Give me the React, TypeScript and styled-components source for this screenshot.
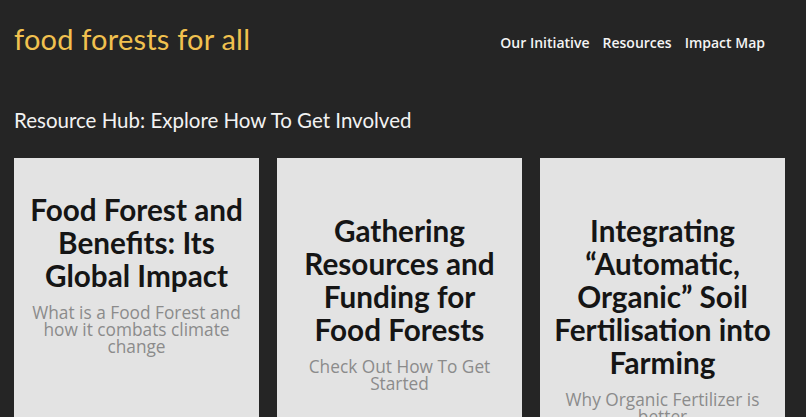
import React from 'react';
import styled, { createGlobalStyle } from 'styled-components';

const GlobalStyle = createGlobalStyle`
  html, body {
    margin: 0;
    padding: 0;
    background-color: #252525;
  }
  body {
    font-family: 'Open Sans', 'Liberation Sans', sans-serif;
    overflow: hidden;
  }
`;

const Page = styled.div`
  min-height: 417px;
  background-color: #252525;
  padding: 0 21px 0 14px;
`;

const Header = styled.header`
  display: flex;
  align-items: center;
  justify-content: space-between;
  height: 82px;
`;

const Logo = styled.h1`
  margin: 0;
  font-family: 'Lato', 'Liberation Sans', sans-serif;
  font-weight: 400;
  font-size: 29px;
  color: #f1c14f;
  letter-spacing: 0.2px;
  padding-bottom: 5px;
`;

const Nav = styled.nav`
  display: flex;
  gap: 13px;
  padding: 2px 20px 0 0;
`;

const NavLink = styled.a`
  font-family: 'Open Sans', 'Liberation Sans', sans-serif;
  font-weight: 600;
  font-size: 14px;
  color: #f4f4f4;
  text-decoration: none;
`;

const PageTitle = styled.h2`
  margin: 26px 0 26px;
  font-family: 'Lato', 'Liberation Sans', sans-serif;
  font-weight: 400;
  font-size: 20.5px;
  color: #f2f2f2;
`;

const CardGrid = styled.div`
  display: grid;
  grid-template-columns: repeat(3, 245px);
  gap: 18px;
`;

const Card = styled.div<{ $top: number }>`
  background-color: #e3e3e3;
  height: 300px;
  padding: ${(p) => p.$top}px 12px 0;
  box-sizing: border-box;
  text-align: center;
`;

const CardTitle = styled.h3`
  margin: 0 0 12px;
  font-family: 'Lato', 'Liberation Sans', sans-serif;
  font-weight: 700;
  font-size: 29.7px;
  line-height: 33px;
  color: #151515;
`;

const CardText = styled.p`
  margin: 0;
  font-family: 'Open Sans', 'Liberation Sans', sans-serif;
  font-size: 17.3px;
  line-height: 17px;
  color: #8b8b8b;
`;

const cards = [
  {
    title: 'Food Forest and Benefits: Its Global Impact',
    text: 'What is a Food Forest and how it combats climate change',
    top: 35,
  },
  {
    title: 'Gathering Resources and Funding for Food Forests',
    text: 'Check Out How To Get Started',
    top: 56,
  },
  {
    title: 'Integrating \u201CAutomatic, Organic\u201D Soil Fertilisation into Farming',
    text: 'Why Organic Fertilizer is better',
    top: 56,
  },
];

export default function App() {
  return (
    <Page>
      <GlobalStyle />
      <Header>
        <Logo>food forests for all</Logo>
        <Nav>
          <NavLink href="#">Our Initiative</NavLink>
          <NavLink href="#">Resources</NavLink>
          <NavLink href="#">Impact Map</NavLink>
        </Nav>
      </Header>
      <PageTitle>Resource Hub: Explore How To Get Involved</PageTitle>
      <CardGrid>
        {cards.map((c) => (
          <Card key={c.title} $top={c.top}>
            <CardTitle>{c.title}</CardTitle>
            <CardText>{c.text}</CardText>
          </Card>
        ))}
      </CardGrid>
    </Page>
  );
}
